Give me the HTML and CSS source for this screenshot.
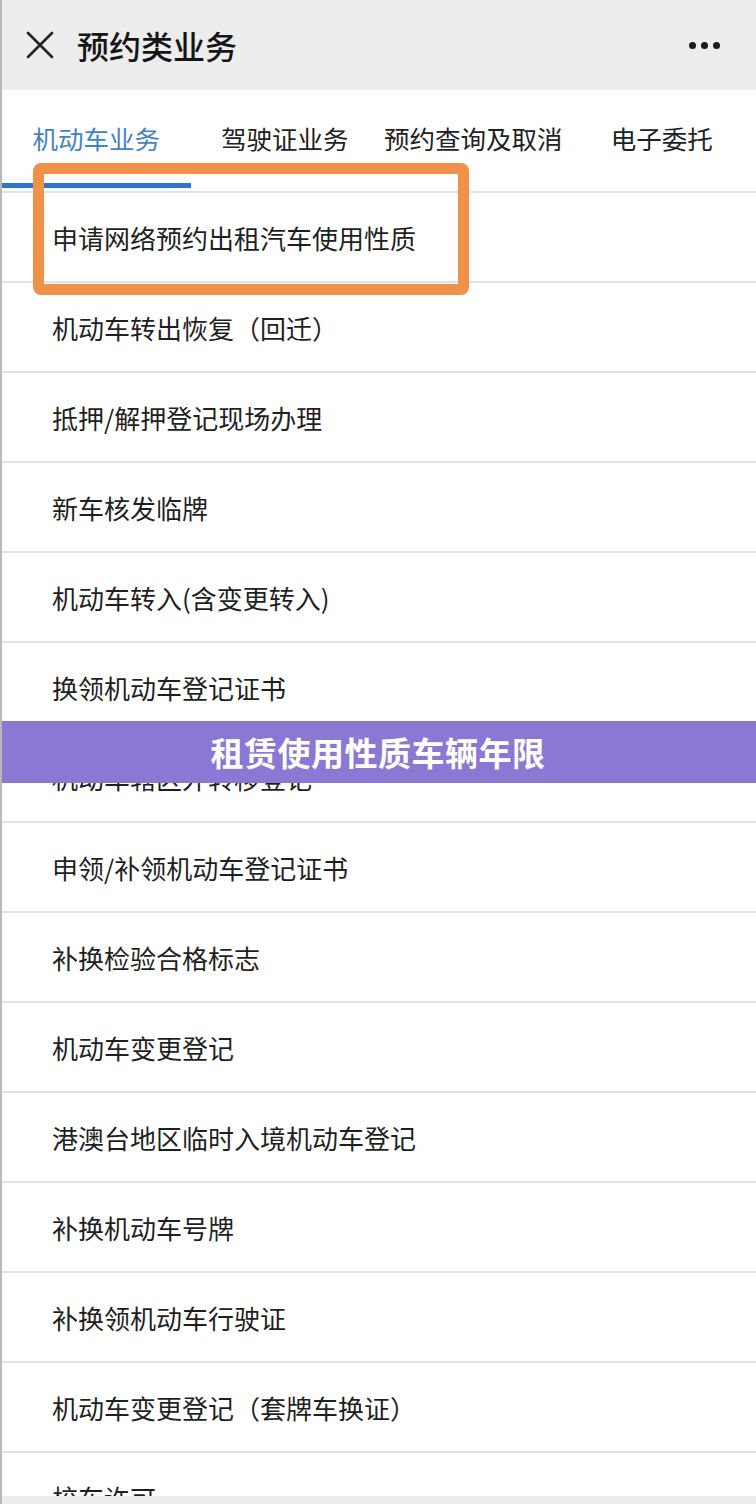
FILE: index.html
```html
<!DOCTYPE html>
<html lang="zh-CN">
<head>
<meta charset="utf-8">
<title>预约类业务</title>
<link rel="stylesheet" href="styles.css">
</head>
<body>
<div class="page">
  <header class="topbar">
    <svg class="close" width="30" height="30" viewBox="0 0 30 30"><path d="M3 3 L27 27 M27 3 L3 27" stroke="#222" stroke-width="2.6" fill="none" stroke-linecap="round"/></svg>
    <span class="title">预约类业务</span>
    <span class="more"><i></i><i></i><i></i></span>
  </header>
  <nav class="tabs">
    <div class="tab active">机动车业务</div>
    <div class="tab">驾驶证业务</div>
    <div class="tab">预约查询及取消</div>
    <div class="tab">电子委托</div>
  </nav>
  <ul class="list">
    <li>申请网络预约出租汽车使用性质</li>
    <li>机动车转出恢复（回迁）</li>
    <li>抵押/解押登记现场办理</li>
    <li>新车核发临牌</li>
    <li>机动车转入(含变更转入)</li>
    <li>换领机动车登记证书</li>
    <li>机动车辖区外转移登记</li>
    <li>申领/补领机动车登记证书</li>
    <li>补换检验合格标志</li>
    <li>机动车变更登记</li>
    <li>港澳台地区临时入境机动车登记</li>
    <li>补换机动车号牌</li>
    <li>补换领机动车行驶证</li>
    <li>机动车变更登记（套牌车换证）</li>
    <li>校车许可</li>
  </ul>
  <div class="highlight"></div>
  <div class="banner">租赁使用性质车辆年限</div>
  <div class="bottombar"></div>
</div>
</body>
</html>
```

FILE: styles.css
```css
* { box-sizing: border-box; }
html, body { margin: 0; padding: 0; }
body {
  width: 756px;
  height: 1504px;
  overflow: hidden;
  background: #fff;
  font-family: "Noto Sans CJK SC", "Noto Sans", sans-serif;
  color: #1e1e1e;
}
.page {
  position: relative;
  width: 756px;
  height: 1504px;
  overflow: hidden;
  border-left: 2px solid #b9b9b9;
}
.topbar {
  height: 90px;
  background: #ededed;
  display: flex;
  align-items: center;
  padding-left: 23px;
  padding-right: 36px;
}
.close { flex: none; }
.title {
  margin-left: 22px;
  font-size: 32px;
  font-weight: 500;
  color: #161616;
  flex: 1;
}
.more { display: flex; gap: 5px; align-items: center; }
.more i {
  display: block;
  width: 7px;
  height: 7px;
  border-radius: 50%;
  background: #1a1a1a;
}
.tabs {
  display: flex;
  height: 103px;
  border-bottom: 2px solid #e2e2e2;
}
.tab {
  position: relative;
  flex: 1;
  text-align: center;
  font-size: 25.5px;
  line-height: 34px;
  padding-top: 31px;
  color: #222;
  white-space: nowrap;
}
.tab.active { color: #3f84c6; }
.tab.active::after {
  content: "";
  position: absolute;
  left: -2px;
  right: 0;
  bottom: 3px;
  height: 5px;
  background: #2f74c8;
}
.list { list-style: none; margin: 0; padding: 0; }
.list li {
  height: 90px;
  border-bottom: 2px solid #e2e2e2;
  display: flex;
  align-items: center;
  padding-left: 50px;
  font-size: 26px;
  color: #1f1f1f;
  white-space: nowrap;
}
.highlight {
  position: absolute;
  left: 31px;
  top: 163px;
  width: 436px;
  height: 132px;
  border: 11px solid #f0914a;
  border-radius: 8px;
}
.banner {
  position: absolute;
  left: -2px;
  top: 721px;
  width: 756px;
  height: 62px;
  background: #8b78d5;
  color: #fff;
  font-size: 33px;
  font-weight: 700;
  text-align: center;
  line-height: 62px;
  letter-spacing: 0.5px;
}
.bottombar {
  position: absolute;
  left: -2px;
  bottom: 0;
  width: 756px;
  height: 8px;
  background: #ececec;
}
```
